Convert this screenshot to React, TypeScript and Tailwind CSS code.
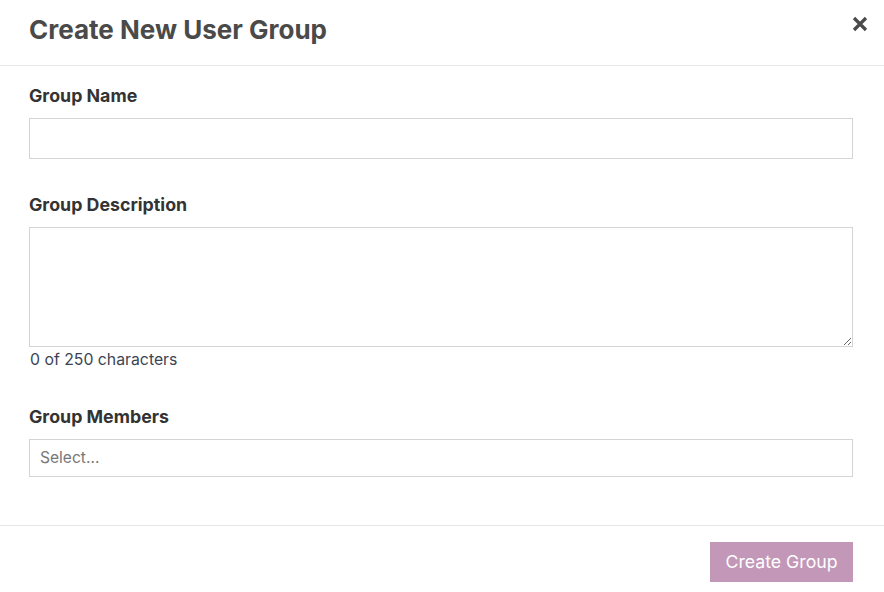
export default function App() {
    return (
        <div className="w-[884px] h-[592px] bg-white text-[#333333]" style={{ fontFamily: 'Inter, "Noto Sans", sans-serif' }}>
            <div className="flex items-center justify-between h-[66px] pl-[29px] pr-[12px] border-b border-[#e6e6e6]">
                <h2 className="text-[26px] font-bold text-[#4a4a4a] -mt-[6px]">Create New User Group</h2>
                <button className="w-[24px] h-[24px] flex items-center justify-center -mt-[18px]">
                    <svg width="16" height="16" viewBox="0 0 16 16">
                        <path d="M2 2L14 14M14 2L2 14" stroke="#4a4a4a" strokeWidth="3.2" />
                    </svg>
                </button>
            </div>
            <div className="pl-[29px] pr-[31px] pt-[20px] pb-[48px] flex flex-col">
                <label className="text-[17.8px] font-bold leading-[20px] mb-[12px]">Group Name</label>
                <input className="h-[41px] border border-[#d4d4d4] outline-none px-[10px]" />
                <label className="text-[17.8px] font-bold leading-[20px] mt-[36px] mb-[12px]">Group Description</label>
                <textarea className="h-[120px] border border-[#d4d4d4] outline-none px-[10px] py-[8px]" />
                <div className="text-[15.8px] text-[#3c4454] leading-[20px] mt-[3px] ml-[1px]">0 of 250 characters</div>
                <label className="text-[17.8px] font-bold leading-[20px] mt-[37px] mb-[12px]">Group Members</label>
                <div className="h-[38px] border border-[#d4d4d4] flex items-center px-[10px] text-[15.6px] text-[#777]">Select...</div>
            </div>
            <div className="border-t border-[#e6e6e6] flex justify-end pr-[31px] pt-[16px]">
                <button className="h-[40px] w-[143px] bg-[#c297b8] text-white text-[17.7px]">Create Group</button>
            </div>
        </div>
    );
}
